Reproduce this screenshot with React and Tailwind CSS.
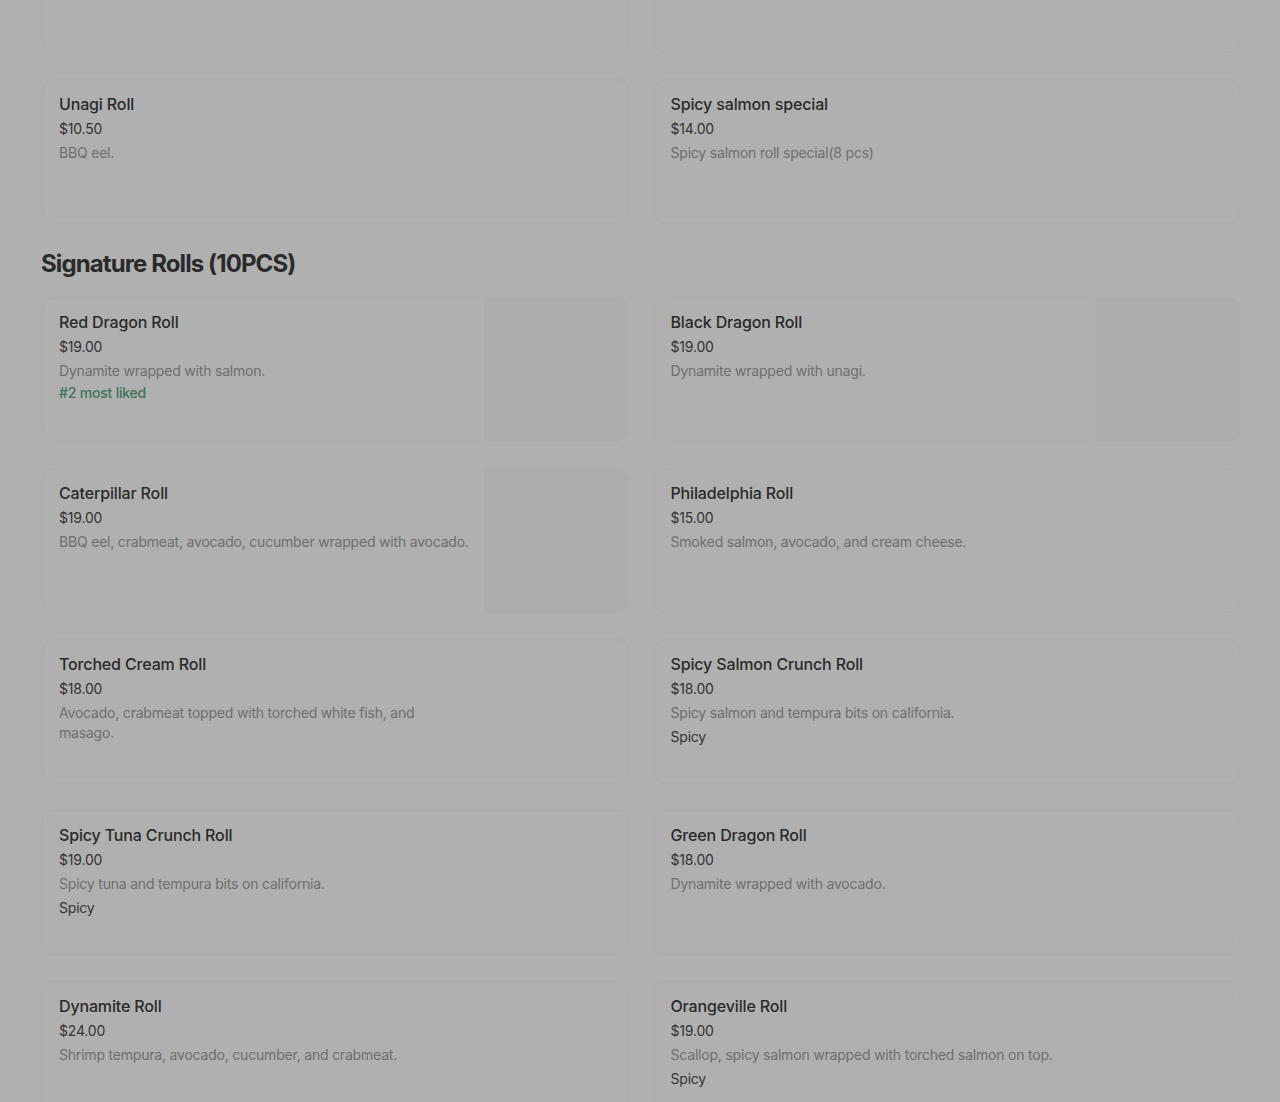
const topItems = [
  { name: "", price: "", desc: "" },
  { name: "", price: "", desc: "" },
  { name: "Unagi Roll", price: "$10.50", desc: "BBQ eel." },
  { name: "Spicy salmon special", price: "$14.00", desc: "Spicy salmon roll special(8 pcs)" },
];

const signature = [
  { name: "Red Dragon Roll", price: "$19.00", desc: "Dynamite wrapped with salmon.", liked: "#2 most liked", img: true },
  { name: "Black Dragon Roll", price: "$19.00", desc: "Dynamite wrapped with unagi.", img: true },
  { name: "Caterpillar Roll", price: "$19.00", desc: "BBQ eel, crabmeat, avocado, cucumber wrapped with avocado.", img: true },
  { name: "Philadelphia Roll", price: "$15.00", desc: "Smoked salmon, avocado, and cream cheese." },
  { name: "Torched Cream Roll", price: "$18.00", desc: "Avocado, crabmeat topped with torched white fish, and masago." },
  { name: "Spicy Salmon Crunch Roll", price: "$18.00", desc: "Spicy salmon and tempura bits on california.", spicy: true },
  { name: "Spicy Tuna Crunch Roll", price: "$19.00", desc: "Spicy tuna and tempura bits on california.", spicy: true },
  { name: "Green Dragon Roll", price: "$18.00", desc: "Dynamite wrapped with avocado." },
  { name: "Dynamite Roll", price: "$24.00", desc: "Shrimp tempura, avocado, cucumber, and crabmeat." },
  { name: "Orangeville Roll", price: "$19.00", desc: "Scallop, spicy salmon wrapped with torched salmon on top.", spicy: true },
];

const ItemCard = ({ item }) => (
  <div className="h-[145px] flex rounded-xl border border-[#acacac] overflow-hidden">
    <div className="flex-1 min-w-0 pl-[16px] pr-[12px] pt-[14px]">
      {item.name && (
        <>
          <div className="text-[16px] leading-[20px] font-medium tracking-[-0.15px] text-[#2a2a2a]">{item.name}</div>
          <div className="mt-[5px] text-[14px] leading-[20px] tracking-[-0.2px] text-[#333333]">{item.price}</div>
          <div className="mt-[4px] text-[14px] leading-[20px] tracking-[-0.2px] text-[#6e6e6e]">{item.desc}</div>
          {item.liked && (
            <div className="mt-[2px] text-[14px] leading-[20px] font-medium tracking-[-0.2px] text-[#3b7356]">{item.liked}</div>
          )}
          {item.spicy && (
            <div className="mt-[4px] text-[14px] leading-[20px] tracking-[-0.2px] text-[#333333]">Spicy</div>
          )}
        </>
      )}
    </div>
    <div className={"w-[144px] shrink-0 " + (item.img ? "bg-[#acacac]" : "")} />
  </div>
);

export default function App() {
  return (
    <div
      className="min-h-screen bg-[#b0b0b0] overflow-hidden"
      style={{ fontFamily: "Inter, 'Liberation Sans', sans-serif" }}
    >
      <div className="-mt-[92px] pl-[42px] pr-[40px]">
        <div className="grid grid-cols-2 gap-x-[25px] gap-y-[26px]">
          {topItems.map((it, i) => (
            <ItemCard key={i} item={it} />
          ))}
        </div>

        <h2 className="-ml-[1px] mt-[24px] mb-[17px] text-[24px] leading-[32px] font-bold tracking-[-0.9px] text-[#2a2a2a]">
          Signature Rolls (10PCS)
        </h2>

        <div className="grid grid-cols-2 gap-x-[25px] gap-y-[26px]">
          {signature.map((it, i) => (
            <ItemCard key={i} item={it} />
          ))}
        </div>
      </div>
    </div>
  );
}
